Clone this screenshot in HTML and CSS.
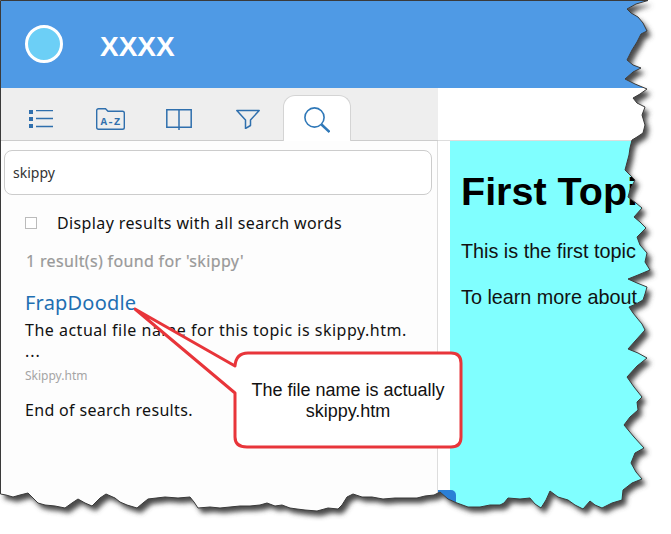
FILE: index.html
```html
<!DOCTYPE html>
<html lang="en">
<head>
<meta charset="utf-8">
<title>XXXX</title>
<link rel="stylesheet" href="styles.css">
</head>
<body>
<div class="window">
  <header class="header">
    <span class="logo"></span>
    <h1 class="title">XXXX</h1>
  </header>
  <div class="main">
    <aside class="sidebar">
      <nav class="tabs">
        <div class="tab">
          <svg class="icon" width="24" height="18" viewBox="0 0 24 18"><g fill="#2f6fad"><rect x="0" y="0" width="4" height="4"/><rect x="0" y="7" width="4" height="4"/><rect x="0" y="14" width="4" height="4"/></g><path d="M7 .7H24M7 8.5H24M7 16.5H24" stroke="#2f6fad" stroke-width="1.3" fill="none"/></svg>
        </div>
        <div class="tab">
          <svg class="icon" width="29" height="22" viewBox="0 0 29 22"><path d="M.7 2.5Q.7 .7 2.5 .7H9.5L12 3.2H26.5Q28.3 3.2 28.3 5V19.5Q28.3 21.3 26.5 21.3H2.5Q.7 21.3 .7 19.5Z" fill="none" stroke="#2f6fad" stroke-width="1.4"/><text x="14.5" y="17" class="az">A-Z</text></svg>
        </div>
        <div class="tab">
          <svg class="icon" width="26" height="21" viewBox="0 0 26 21"><path d="M13 .8H.8V18.2H13M13 .8H25.2V18.2H13M13 .8V21" fill="none" stroke="#2f6fad" stroke-width="1.5"/></svg>
        </div>
        <div class="tab">
          <svg class="icon" width="24" height="20" viewBox="0 0 24 20"><path d="M.8 1.5H23.2L14.5 11V16.5L9.5 19.5V11Z" fill="none" stroke="#2f6fad" stroke-width="1.5" stroke-linejoin="round"/></svg>
        </div>
        <div class="tab tab-active">
          <svg class="icon" width="26" height="26" viewBox="0 0 26 26"><circle cx="10.5" cy="10.5" r="9.6" fill="none" stroke="#2f78b8" stroke-width="1.6"/><path d="M17.5 17.5L25.5 25" stroke="#2f78b8" stroke-width="2.4"/></svg>
        </div>
      </nav>
      <section class="panel">
        <div class="search-box">skippy</div>
        <label class="check-row"><span class="checkbox"></span><span>Display results with all search words</span></label>
        <p class="found">1 result(s) found for 'skippy'</p>
        <a class="result-link">FrapDoodle</a>
        <p class="result-text">The actual file name for this topic is skippy.htm.</p>
        <p class="result-dots">...</p>
        <p class="result-file">Skippy.htm</p>
        <p class="result-end">End of search results.</p>
      </section>
    </aside>
    <div class="content">
      <div class="content-bar"></div>
      <article class="topic">
        <h2 class="topic-title">First Topic</h2>
        <p class="topic-text">This is the first topic</p>
        <p class="topic-text">To learn more about</p>
      </article>
    </div>
  </div>
  <span class="corner-tab"></span>
  <svg class="torn" width="671" height="534" viewBox="0 0 671 534">
    <defs>
      <path id="edge" d="M0.5 0.5H648L636 4L627 9L631 13L638 17L643 23L647 31L641 34L637 42L632 50L627 60L633 65L641 68L633 72L625 79L635 84L647 89L640 94L633 98L637 103L645 107L642 115L645 125L643 133L637 137L632 140L630 148L629 155L625 170L630 175L635 180L630 190L628 197L636 203L642 208L634 217L640 222L646 228L637 237L640 245L647 253L645 262L650 270L638 275L628 279L637 283L647 287L645 294L643 300L636 304L629 307L633 313L637 318L642 324L645 330L636 340L628 349L638 353L647 358L637 366L627 377L634 387L642 397L637 402L638 410L630 417L624 425L634 437L644 448L635 453L631 463L636 472L642 479L632 483L623 490L622 500L612 503L602 508L595 505L590 501L583 509L575 505L568 500L558 497L550 491L546 500L541 508L535 504L530 498L520 499L508 498L504 503L500 505L490 505L480 507L468 507L457 503L448 499L440 492L434 495L425 496L417 498L405 498L395 498L383 499L372 497L362 497L353 494L347 497L342 505L338 509L328 508L317 511L305 510L297 509L290 508L282 505L275 506L267 503L260 505L250 506L240 506L220 508L210 507L198 508L194 502L190 497L178 498L165 497L148 499L143 503L137 508L127 505L120 502L115 498L106 494L100 498L92 506L85 503L78 499L72 503L65 508L55 506L45 505L38 503L33 498L28 493L20 495L13 497L6 495L0.5 494Z"/>
      <clipPath id="outside"><path clip-rule="evenodd" d="M0 0H671V534H0Z M0.5 0.5H648L636 4L627 9L631 13L638 17L643 23L647 31L641 34L637 42L632 50L627 60L633 65L641 68L633 72L625 79L635 84L647 89L640 94L633 98L637 103L645 107L642 115L645 125L643 133L637 137L632 140L630 148L629 155L625 170L630 175L635 180L630 190L628 197L636 203L642 208L634 217L640 222L646 228L637 237L640 245L647 253L645 262L650 270L638 275L628 279L637 283L647 287L645 294L643 300L636 304L629 307L633 313L637 318L642 324L645 330L636 340L628 349L638 353L647 358L637 366L627 377L634 387L642 397L637 402L638 410L630 417L624 425L634 437L644 448L635 453L631 463L636 472L642 479L632 483L623 490L622 500L612 503L602 508L595 505L590 501L583 509L575 505L568 500L558 497L550 491L546 500L541 508L535 504L530 498L520 499L508 498L504 503L500 505L490 505L480 507L468 507L457 503L448 499L440 492L434 495L425 496L417 498L405 498L395 498L383 499L372 497L362 497L353 494L347 497L342 505L338 509L328 508L317 511L305 510L297 509L290 508L282 505L275 506L267 503L260 505L250 506L240 506L220 508L210 507L198 508L194 502L190 497L178 498L165 497L148 499L143 503L137 508L127 505L120 502L115 498L106 494L100 498L92 506L85 503L78 499L72 503L65 508L55 506L45 505L38 503L33 498L28 493L20 495L13 497L6 495L0.5 494Z"/></clipPath>
      <filter id="soft" x="-5%" y="-5%" width="110%" height="110%"><feGaussianBlur stdDeviation="2.4"/></filter>
    </defs>
    <rect width="671" height="534" fill="#fff" clip-path="url(#outside)"/>
    <g clip-path="url(#outside)"><use href="#edge" fill="#4a4a4a" filter="url(#soft)" transform="translate(4 5)"/></g>
    <use href="#edge" fill="none" stroke="#3a3a3a" stroke-width="1"/>
  </svg>
  <svg class="callout-shape" width="340" height="150" viewBox="0 0 340 150">
    <path d="M1 5L101 62Q102 49 114 49H317Q327 49 327 59V133Q327 143 317 143H113Q101 143 101 133V89Z" fill="#fff" stroke="#e8353a" stroke-width="3" stroke-linejoin="round"/>
  </svg>
  <div class="callout-text">The file name is actually skippy.htm</div>
</div>
</body>
</html>
```
FILE: styles.css
```css
* { box-sizing: border-box; }
html, body { margin: 0; padding: 0; background: #fff; }
.window {
  position: relative;
  width: 671px;
  height: 534px;
  overflow: hidden;
  display: flex;
  flex-direction: column;
  font-family: "Noto Sans", sans-serif;
}
.header {
  height: 88px;
  flex: none;
  background: #4f9ae5;
  display: flex;
  align-items: center;
  padding-left: 25px;
  gap: 37px;
}
.logo {
  width: 38px;
  height: 38px;
  border-radius: 50%;
  border: 3px solid #fff;
  background: #6ccff6;
  flex: none;
}
.title {
  margin: 0;
  padding-top: 6px;
  color: #fff;
  font: 700 28px "Liberation Sans", sans-serif;
}
.main { flex: 1; display: flex; min-height: 0; }
.sidebar { width: 438px; flex: none; display: flex; flex-direction: column; }
.tabs {
  height: 53px;
  flex: none;
  background: #eee;
  border-bottom: 1px solid #ccc;
  display: flex;
  gap: 1px;
  padding: 7px 0 0 7px;
}
.tab {
  width: 68px;
  height: 46px;
  display: flex;
  align-items: center;
  justify-content: center;
  padding-top: 2px;
}
.tab-active {
  background: #fff;
  border: 1px solid #d4d4d4;
  border-bottom: none;
  border-radius: 12px 12px 0 0;
}
.az { font: 700 11px "Liberation Mono", monospace; fill: #2f6fad; text-anchor: middle; }
.panel {
  flex: 1;
  background: #fdfdfd;
  border-right: 1px solid #ddd;
  padding: 9px 5px 0 4px;
  font-size: 16px;
  color: #111;
}
.search-box {
  height: 45px;
  border: 1px solid #ccc;
  border-radius: 8px;
  background: #fff;
  display: flex;
  align-items: center;
  padding-left: 8px;
  font-size: 14px;
  color: #333;
}
.check-row {
  display: flex;
  align-items: center;
  gap: 20px;
  margin: 17px 0 0 21px;
  height: 21px;
  letter-spacing: 0.38px;
}
.checkbox { width: 12px; height: 12px; border: 1px solid #bbb; background: #fff; flex: none; margin-top: 1px; }
.found { margin: 18px 0 0 22px; height: 21px; line-height: 21px; color: #999; letter-spacing: 0.34px; -webkit-text-stroke: 0.2px #999; }
.result-link { display: block; margin: 18px 0 0 21px; height: 26px; line-height: 26px; font-size: 20px; letter-spacing: 0.2px; color: #1f6fb2; }
.result-text { margin: 4px 0 0 21px; height: 21px; line-height: 21px; letter-spacing: 0.5px; }
.result-dots { margin: 2px 0 0 21px; height: 20px; line-height: 16px; letter-spacing: 1px; }
.result-file { margin: 4px 0 0 21px; height: 17px; line-height: 17px; font-size: 12px; color: #a5a5a5; }
.result-end { margin: 16px 0 0 21px; height: 21px; line-height: 21px; letter-spacing: 0.33px; }
.content { flex: 1; display: flex; flex-direction: column; min-width: 0; background: #fff; }
.content-bar { height: 53px; flex: none; border-bottom: 1px solid #ddd; }
.topic {
  flex: 1;
  margin-left: 12px;
  background: #80ffff;
  padding: 29px 0 0 11px;
  font-family: "Liberation Sans", sans-serif;
  color: #111;
  white-space: nowrap;
  overflow: hidden;
}
.topic-title { margin: 0 0 28px; font-size: 39.5px; line-height: 42px; font-weight: 700; color: #000; }
.topic-text { margin: 0 0 24px; font-size: 19.8px; line-height: 22px; }
.corner-tab {
  position: absolute;
  left: 438px;
  top: 490px;
  width: 18px;
  height: 16px;
  background: #2a7fd6;
  border-radius: 0 5px 0 0;
}
.torn { position: absolute; left: 0; top: 0; }
.callout-shape { position: absolute; left: 134px; top: 304px; }
.callout-text {
  position: absolute;
  left: 235px;
  top: 380px;
  width: 226px;
  padding: 0 15px;
  text-align: center;
  font: 18px/21px "Liberation Sans", sans-serif;
  color: #111;
}
```
